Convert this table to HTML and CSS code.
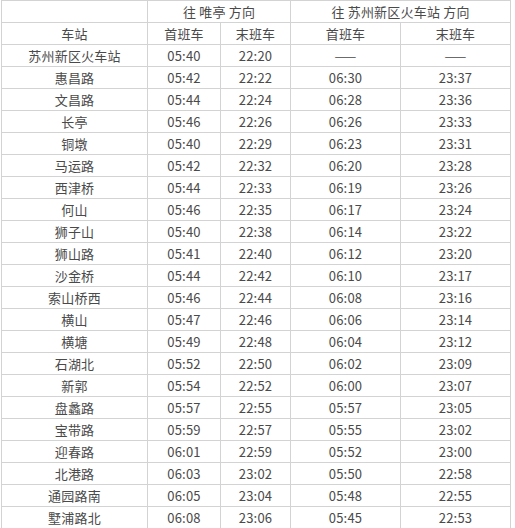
FILE: index.html
```html
<!DOCTYPE html>
<html lang="zh">
<head>
<meta charset="utf-8">
<link rel="stylesheet" href="styles.css">
</head>
<body>
<table class="timetable">
  <colgroup>
    <col class="c-station">
    <col class="c-a1">
    <col class="c-a2">
    <col class="c-b1">
    <col class="c-b2">
  </colgroup>
  <tr><td></td><td colspan="2">往 唯亭 方向</td><td colspan="2">往 苏州新区火车站 方向</td></tr>
  <tr><td>车站</td><td>首班车</td><td>末班车</td><td>首班车</td><td>末班车</td></tr>
  <tr><td>苏州新区火车站</td><td>05:40</td><td>22:20</td><td>——</td><td>——</td></tr>
  <tr><td>惠昌路</td><td>05:42</td><td>22:22</td><td>06:30</td><td>23:37</td></tr>
  <tr><td>文昌路</td><td>05:44</td><td>22:24</td><td>06:28</td><td>23:36</td></tr>
  <tr><td>长亭</td><td>05:46</td><td>22:26</td><td>06:26</td><td>23:33</td></tr>
  <tr><td>铜墩</td><td>05:40</td><td>22:29</td><td>06:23</td><td>23:31</td></tr>
  <tr><td>马运路</td><td>05:42</td><td>22:32</td><td>06:20</td><td>23:28</td></tr>
  <tr><td>西津桥</td><td>05:44</td><td>22:33</td><td>06:19</td><td>23:26</td></tr>
  <tr><td>何山</td><td>05:46</td><td>22:35</td><td>06:17</td><td>23:24</td></tr>
  <tr><td>狮子山</td><td>05:40</td><td>22:38</td><td>06:14</td><td>23:22</td></tr>
  <tr><td>狮山路</td><td>05:41</td><td>22:40</td><td>06:12</td><td>23:20</td></tr>
  <tr><td>沙金桥</td><td>05:44</td><td>22:42</td><td>06:10</td><td>23:17</td></tr>
  <tr><td>索山桥西</td><td>05:46</td><td>22:44</td><td>06:08</td><td>23:16</td></tr>
  <tr><td>横山</td><td>05:47</td><td>22:46</td><td>06:06</td><td>23:14</td></tr>
  <tr><td>横塘</td><td>05:49</td><td>22:48</td><td>06:04</td><td>23:12</td></tr>
  <tr><td>石湖北</td><td>05:52</td><td>22:50</td><td>06:02</td><td>23:09</td></tr>
  <tr><td>新郭</td><td>05:54</td><td>22:52</td><td>06:00</td><td>23:07</td></tr>
  <tr><td>盘蠡路</td><td>05:57</td><td>22:55</td><td>05:57</td><td>23:05</td></tr>
  <tr><td>宝带路</td><td>05:59</td><td>22:57</td><td>05:55</td><td>23:02</td></tr>
  <tr><td>迎春路</td><td>06:01</td><td>22:59</td><td>05:52</td><td>23:00</td></tr>
  <tr><td>北港路</td><td>06:03</td><td>23:02</td><td>05:50</td><td>22:58</td></tr>
  <tr><td>通园路南</td><td>06:05</td><td>23:04</td><td>05:48</td><td>22:55</td></tr>
  <tr><td>墅浦路北</td><td>06:08</td><td>23:06</td><td>05:45</td><td>22:53</td></tr>
</table>
</body>
</html>
```

FILE: styles.css
```css
html, body {
  margin: 0;
  padding: 0;
  background: #ffffff;
}
body {
  padding: 0 0 0 1px;
  font-family: "Noto Sans CJK SC", "Microsoft YaHei", sans-serif;
  font-size: 13px;
  color: #4a4a4a;
}
.timetable {
  border-collapse: collapse;
  table-layout: fixed;
  width: 510px;
}
.c-station { width: 146px; }
.c-a1 { width: 73px; }
.c-a2 { width: 70px; }
.c-b1 { width: 110px; }
.c-b2 { width: 110px; }
.timetable td {
  border: 1px solid #d3d3d3;
  height: 21px;
  padding: 0;
  text-align: center;
  vertical-align: middle;
  line-height: 20px;
  white-space: nowrap;
  letter-spacing: 0.2px;
}
```
